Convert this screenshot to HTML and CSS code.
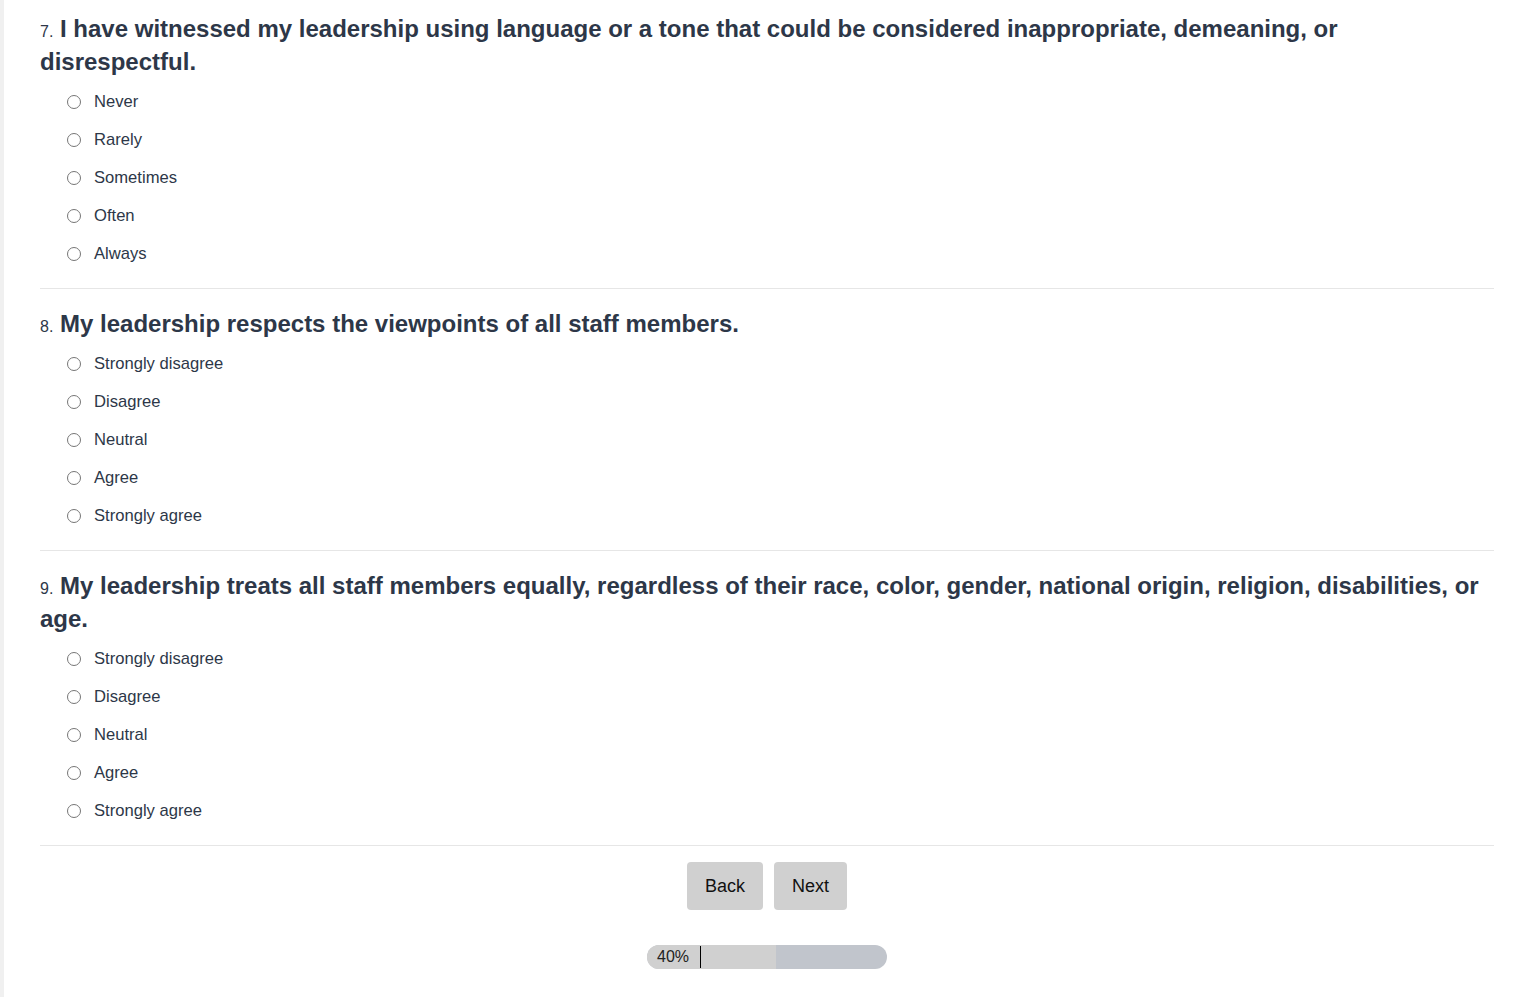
FILE: index.html
```html
<!DOCTYPE html>
<html lang="en">
<head>
  <meta charset="UTF-8" />
  <title>Survey - Page 3</title>
  <link rel="stylesheet" href="styles.css">
</head>
<body>
  <main class="page">
    <form class="survey" id="surveyForm">

      <section class="question">
        <h2 class="question-title"><span class="num">7.</span> I have witnessed my leadership using language or a tone that could be considered inappropriate, demeaning, or disrespectful.</h2>
        <label class="option"><input type="radio" name="q7" value="1"><span>Never</span></label>
        <label class="option"><input type="radio" name="q7" value="2"><span>Rarely</span></label>
        <label class="option"><input type="radio" name="q7" value="3"><span>Sometimes</span></label>
        <label class="option"><input type="radio" name="q7" value="4"><span>Often</span></label>
        <label class="option"><input type="radio" name="q7" value="5"><span>Always</span></label>
      </section>

      <section class="question">
        <h2 class="question-title"><span class="num">8.</span> My leadership respects the viewpoints of all staff members.</h2>
        <label class="option"><input type="radio" name="q8" value="1"><span>Strongly disagree</span></label>
        <label class="option"><input type="radio" name="q8" value="2"><span>Disagree</span></label>
        <label class="option"><input type="radio" name="q8" value="3"><span>Neutral</span></label>
        <label class="option"><input type="radio" name="q8" value="4"><span>Agree</span></label>
        <label class="option"><input type="radio" name="q8" value="5"><span>Strongly agree</span></label>
      </section>

      <section class="question">
        <h2 class="question-title"><span class="num">9.</span> My leadership treats all staff members equally, regardless of their race, color, gender, national origin, religion, disabilities, or age.</h2>
        <label class="option"><input type="radio" name="q9" value="1"><span>Strongly disagree</span></label>
        <label class="option"><input type="radio" name="q9" value="2"><span>Disagree</span></label>
        <label class="option"><input type="radio" name="q9" value="3"><span>Neutral</span></label>
        <label class="option"><input type="radio" name="q9" value="4"><span>Agree</span></label>
        <label class="option"><input type="radio" name="q9" value="5"><span>Strongly agree</span></label>
      </section>

      <div class="nav-buttons">
        <button type="button" class="btn">Back</button>
        <button type="button" class="btn">Next</button>
      </div>

      <div class="progress">
        <div class="progress-done">
          <span class="progress-label">40%</span>
          <span class="progress-caret"></span>
        </div>
      </div>

    </form>
  </main>
</body>
</html>
```

FILE: styles.css
```css
body {
  margin: 0;
  background: #f0f0f0;
  font-family: "Liberation Sans", Arial, sans-serif;
  color: #2d3748;
}

.page {
  margin-left: 4px;
  min-height: 997px;
  background: #fff;
  padding: 12px 32px 0 36px;
  box-sizing: border-box;
}

.question {
  border-bottom: 1px solid #e6e6e6;
  padding-bottom: 15px;
  margin-bottom: 18px;
}

.question-title {
  margin: 0 0 5px;
  font-size: 24px;
  line-height: 33px;
  font-weight: bold;
  color: #2d3748;
}

.question-title .num {
  font-size: 16px;
  line-height: 1;
  font-weight: normal;
}

.option {
  display: flex;
  align-items: center;
  height: 38px;
  padding-left: 27px;
  font-size: 16.6px;
  color: #2d3748;
  cursor: pointer;
}

.option input {
  width: 14px;
  height: 14px;
  margin: 0 13px 0 0;
}

.nav-buttons {
  display: flex;
  justify-content: center;
  gap: 11px;
  margin-top: -2px;
}

.btn {
  height: 48px;
  padding: 0 18px;
  font-family: "Liberation Sans", Arial, sans-serif;
  font-size: 18px;
  color: #111;
  background: #d0d0d0;
  border: none;
  border-radius: 4px;
  cursor: pointer;
}

.btn:hover {
  background: #c4c4c4;
}

.progress {
  width: 240px;
  height: 24px;
  margin: 35px auto 0;
  border-radius: 12px;
  background: #c1c5cc;
  overflow: hidden;
  display: flex;
}

.progress-done {
  width: 129px;
  background: #d0d0d0;
  display: flex;
  align-items: center;
}

.progress-label {
  padding-left: 10px;
  font-size: 16px;
  color: #222;
}

.progress-caret {
  width: 1px;
  height: 22px;
  margin-left: 11px;
  background: #000;
}
```
